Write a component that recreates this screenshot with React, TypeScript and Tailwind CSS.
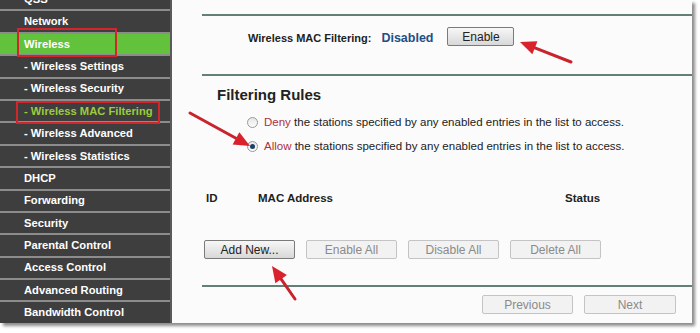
const menu: { label: string; sub?: boolean; active?: boolean; current?: boolean }[] = [
  { label: "QSS" },
  { label: "Network" },
  { label: "Wireless", active: true },
  { label: "Wireless Settings", sub: true },
  { label: "Wireless Security", sub: true },
  { label: "Wireless MAC Filtering", sub: true, current: true },
  { label: "Wireless Advanced", sub: true },
  { label: "Wireless Statistics", sub: true },
  { label: "DHCP" },
  { label: "Forwarding" },
  { label: "Security" },
  { label: "Parental Control" },
  { label: "Access Control" },
  { label: "Advanced Routing" },
  { label: "Bandwidth Control" },
];

function Btn({ children, on, w = "w-[91px]" }: { children: React.ReactNode; on?: boolean; w?: string }) {
  return (
    <button
      type="button"
      className={
        "h-[19px] rounded-[2px] border text-[12px] leading-none " +
        w +
        (on
          ? " border-[#7a7a7a] bg-gradient-to-b from-[#f7f7f7] to-[#d8d8d8] text-[#222]"
          : " border-[#c4c4c4] bg-[#f2f2f2] text-[#8a8a8a]")
      }
    >
      {children}
    </button>
  );
}

function Radio({ checked }: { checked?: boolean }) {
  return (
    <span className="flex h-[11px] w-[11px] items-center justify-center rounded-full border border-[#9a9a9a] bg-gradient-to-b from-[#e6e6e6] to-[#fdfdfd]">
      {checked && <span className="h-[5px] w-[5px] rounded-full bg-[#1c3f66]" />}
    </span>
  );
}

function Arrow({ x1, y1, x2, y2 }: { x1: number; y1: number; x2: number; y2: number }) {
  const a = Math.atan2(y2 - y1, x2 - x1);
  const L = 16;
  const W = 7;
  const bx = x2 - Math.cos(a) * L;
  const by = y2 - Math.sin(a) * L;
  const px = -Math.sin(a) * W;
  const py = Math.cos(a) * W;
  return (
    <g>
      <line x1={x1} y1={y1} x2={bx} y2={by} stroke="#c9232c" strokeWidth={3} strokeLinecap="round" />
      <polygon points={`${x2},${y2} ${bx + px},${by + py} ${bx - px},${by - py}`} fill="#d9222b" />
    </g>
  );
}

export default function App() {
  return (
    <div className="relative h-[333px] w-[700px] overflow-hidden bg-white font-['Liberation_Sans',Arial,sans-serif]">
      <div className="flex h-[323px] w-[692px] shadow-[3px_3px_3px_rgba(0,0,0,0.45)]">
        <nav className="w-[172px] shrink-0 overflow-hidden border-r-2 border-[#5a5a5a] bg-[#3e3e3e]">
          <div className="-mt-[11px]">
            {menu.map((m) => (
              <div
                key={m.label}
                className={
                  "flex h-[22.4px] items-center border-b-2 border-[#8c8c8c] pl-[24px] text-[11.2px] font-bold " +
                  (m.active ? "bg-[#62c23b] text-white" : m.current ? "text-[#9ccc3c]" : "text-white")
                }
              >
                {m.sub ? `- ${m.label}` : m.label}
              </div>
            ))}
          </div>
        </nav>

        <main className="flex-1 bg-[#fbfbfb] pl-[30px] pt-[14px] text-[11.5px] text-[#222]">
          <div className="border-t-2 border-[#647f73]" />
          <div className="flex h-[58px] items-start pt-[11px]">
            <span className="ml-[46px] mt-[3px] text-[11px] font-bold">Wireless MAC Filtering:</span>
            <span className="ml-[10px] mt-[2px] text-[12.5px] font-bold text-[#1f4f86]">Disabled</span>
            <span className="ml-[14px]">
              <Btn on w="w-[67px]">Enable</Btn>
            </span>
          </div>
          <div className="border-t-2 border-[#647f73]" />

          <h2 className="ml-[15px] mt-[10px] text-[15px] font-bold leading-[18px]">Filtering Rules</h2>

          <div className="ml-[45px] mt-[11px] flex items-center gap-[6px] leading-[14px]">
            <Radio />
            <span>
              <span className="text-[#b0303c]">Deny</span> the stations specified by any enabled entries in the list to access.
            </span>
          </div>
          <div className="ml-[45px] mt-[10px] flex items-center gap-[6px] leading-[14px]">
            <Radio checked />
            <span>
              <span className="text-[#b0303c]">Allow</span> the stations specified by any enabled entries in the list to access.
            </span>
          </div>

          <div className="mt-[38px] flex font-bold leading-[14px]">
            <span className="ml-[4px] w-[52px]">ID</span>
            <span className="w-[307px]">MAC Address</span>
            <span>Status</span>
          </div>

          <div className="ml-[2px] mt-[35px] flex gap-[11px]">
            <Btn on>Add New...</Btn>
            <Btn>Enable All</Btn>
            <Btn>Disable All</Btn>
            <Btn>Delete All</Btn>
          </div>

          <div className="mt-[26px] border-t-2 border-[#647f73]" />
          <div className="mt-[8px] flex justify-end gap-[11px] pr-[16px]">
            <Btn>Previous</Btn>
            <Btn w="w-[92px]">Next</Btn>
          </div>
        </main>
      </div>

      <div className="pointer-events-none absolute left-[17px] top-[28px] h-[29px] w-[100px] border-2 border-[#d0262c]" />
      <div className="pointer-events-none absolute left-[16px] top-[101px] h-[23px] w-[144px] border-2 border-[#d0262c]" />

      <svg className="pointer-events-none absolute left-0 top-0" width="700" height="333">
        <Arrow x1={571} y1={62} x2={520} y2={42} />
        <Arrow x1={190} y1={113} x2={250} y2={146} />
        <Arrow x1={295} y1={299} x2={272} y2={266} />
      </svg>
    </div>
  );
}
